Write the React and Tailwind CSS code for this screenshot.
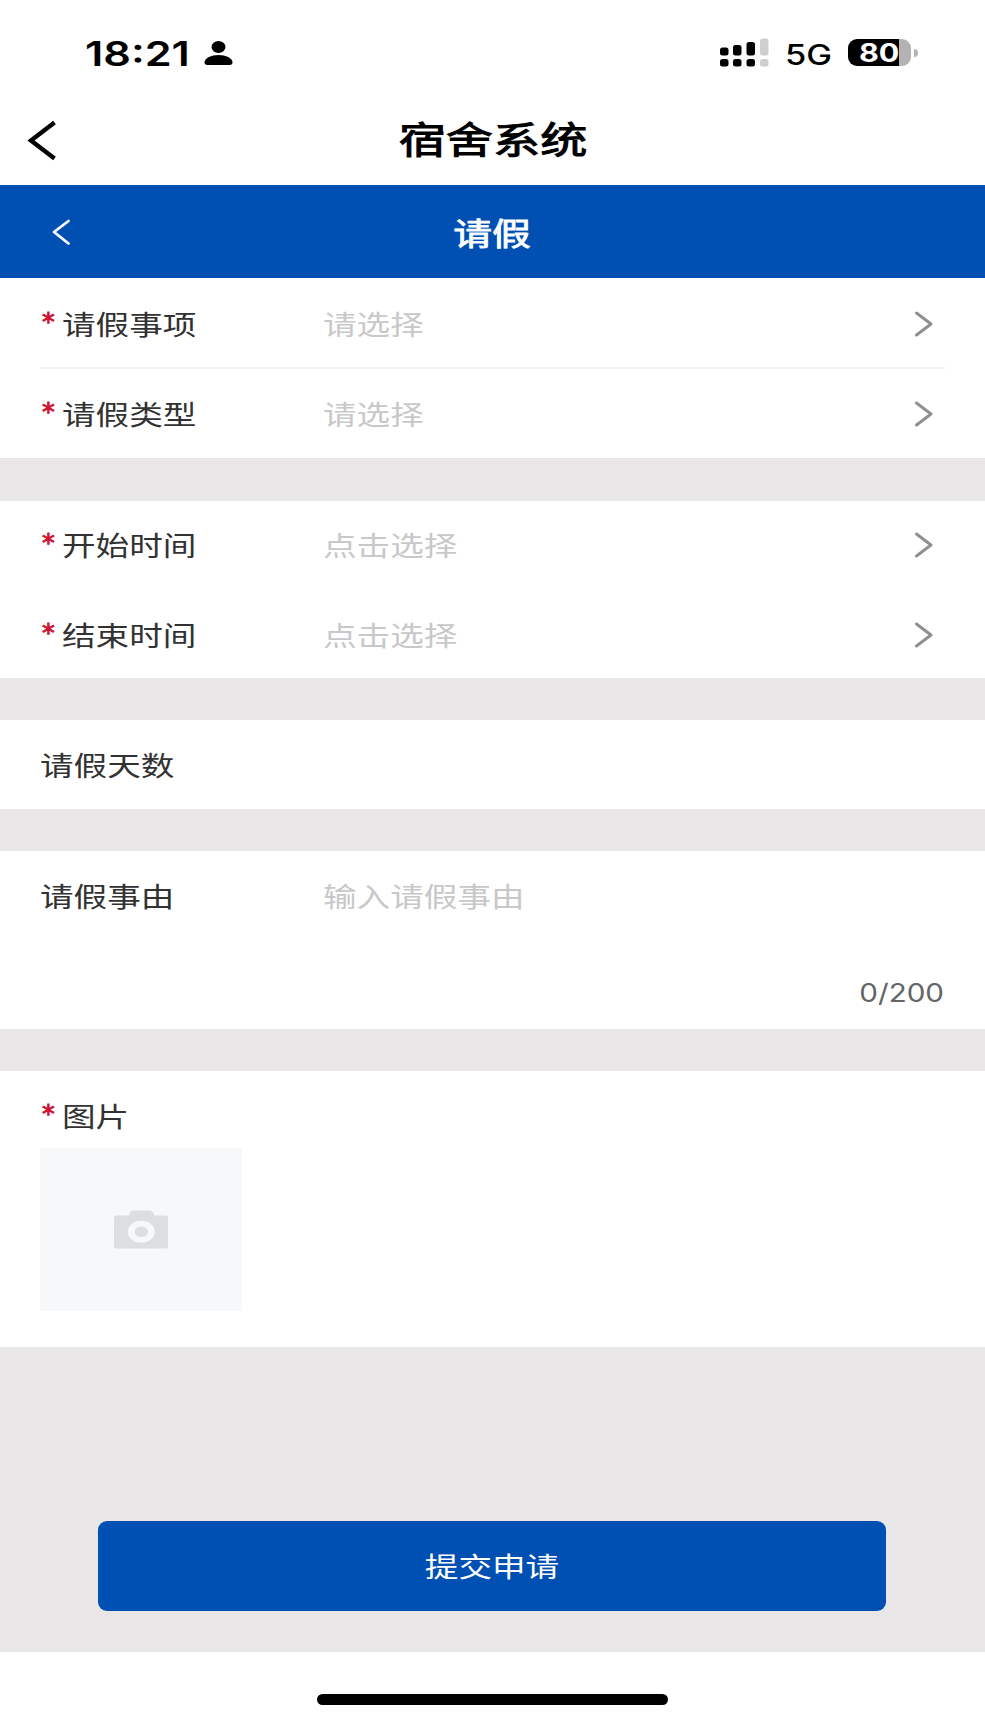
import React from 'react';

// Texto ensanchado en horizontal, anclado a la izquierda
const Label = ({ children, className = '' }) => (
    <span className={`inline-block origin-left scale-x-[1.245] whitespace-nowrap text-[27px] leading-[40px] ${className}`}>
        {children}
    </span>
);

const Required = () => (
    <span className="h-[40px] w-[22px] shrink-0 pl-[2px] font-['DejaVu_Sans',sans-serif] text-[25px] leading-[35px] text-[#d0112f]">
        <span className="inline-block origin-left scale-x-[1.02] [-webkit-text-stroke:0.9px_#d0112f]">*</span>
    </span>
);

const ArrowRight = () => (
    <svg className="mr-[12px] ml-auto" width="20" height="28" viewBox="0 0 20 28" fill="none">
        <path d="M3.5 3 L18 14 L3.5 25" stroke="#8f8f91" strokeWidth="2.9" strokeLinecap="round" strokeLinejoin="round" />
    </svg>
);

// Fila del formulario: etiqueta, valor y flecha opcional
const Field = ({ label, placeholder, required, arrow, className = 'h-[90px]' }) => (
    <div className={`flex items-center ${className}`}>
        <div className="flex w-[283px] shrink-0 items-center">
            {required && <Required />}
            <Label className="text-[#323233]">{label}</Label>
        </div>
        {placeholder && <Label className="text-[#c8c8ca]">{placeholder}</Label>}
        {arrow && <ArrowRight />}
    </div>
);

const StatusBar = () => (
    <div className="flex h-[101px] items-start pt-[33px] pr-[67px] pl-[85px] font-['Inter',sans-serif] text-black">
        <div className="flex h-[41px] w-[119px] items-center">
            <span className="inline-block origin-left scale-x-[1.27] text-[34px] leading-[40px] font-semibold">18:21</span>
        </div>
        <svg className="mt-[8px]" width="29" height="25" viewBox="0 0 29 25">
            <ellipse cx="14.5" cy="6" rx="7" ry="6" />
            <path d="M0.5 21 C1 17 7 14 14.5 14 C22 14 28 17 28.5 21 C28.7 23 27.5 24 25.5 24 H3.5 C1.5 24 0.3 23 0.5 21 Z" />
        </svg>
        <svg className="mt-[5px] ml-auto" width="51" height="30" viewBox="0 0 51 30">
            <rect x="1" y="9.5" width="8.5" height="8" rx="2.5" />
            <rect x="1" y="21" width="8.5" height="7.5" rx="2.5" />
            <rect x="14" y="7" width="8.5" height="10.5" rx="2.5" />
            <rect x="14" y="21" width="8.5" height="7.5" rx="2.5" />
            <rect x="27.5" y="4" width="8.5" height="13.5" rx="2.5" />
            <rect x="27.5" y="21" width="8.5" height="7.5" rx="2.5" />
            <rect x="41" y="0.5" width="8.5" height="17" rx="2.5" fill="#cfcfcf" />
            <rect x="41" y="21" width="8.5" height="7.5" rx="2.5" fill="#cfcfcf" />
        </svg>
        <div className="ml-[15px] flex h-[43px] w-[63px] items-center">
            <span className="inline-block origin-left scale-x-[1.23] text-[28px] leading-[40px] font-medium">5G</span>
        </div>
        <div className="mt-[6px] flex items-center">
            <div className="flex h-[27px] w-[63px] items-center rounded-[9px] bg-[linear-gradient(to_right,#000_51px,#b3b3b3_51px)] pt-px pl-[11px]">
                <span className="inline-block origin-left scale-x-[1.22] text-[25px] leading-[26px] font-bold text-white">80</span>
            </div>
            <div className="ml-[3px] h-[8px] w-[4px] rounded-r-full bg-[#b3b3b3]" />
        </div>
    </div>
);

const App = () => {
    return (
        <div className="flex h-[1721px] w-[985px] flex-col overflow-hidden bg-[#e8e6e7] font-['Noto_Sans_CJK_SC',sans-serif]">
            <div className="h-[185px] bg-white">
                <StatusBar />
                <div className="grid h-[80px] grid-cols-[1fr_auto_1fr] items-center">
                    <svg className="ml-[26px]" width="32" height="42" viewBox="0 0 32 42" fill="none">
                        <path d="M28.5 2.5 L5 20.5 L28.5 38.5" stroke="#000" strokeWidth="4.4" />
                    </svg>
                    <h1 className="mb-[6px] scale-x-[1.275] text-[37px] leading-[56px] text-black [-webkit-text-stroke:1px_#000]">宿舍系统</h1>
                </div>
            </div>

            <header className="grid h-[93px] grid-cols-[1fr_auto_1fr] items-center bg-[#0050b3] text-white">
                <svg className="ml-[50px]" width="22" height="28" viewBox="0 0 22 28" fill="none">
                    <path d="M18.5 3 L4 14 L18.5 25.5" stroke="#fff" strokeWidth="2.8" strokeLinecap="round" strokeLinejoin="round" />
                </svg>
                <h2 className="mr-[1px] scale-x-[1.25] text-[31px] leading-[44px] [-webkit-text-stroke:0.8px_#fff]">请假</h2>
            </header>

            <section className="h-[180px] bg-white px-[40px]">
                <Field label="请假事项" placeholder="请选择" required arrow className="h-[91px] border-b-2 border-[#f3f3f4] pt-[2px]" />
                <Field label="请假类型" placeholder="请选择" required arrow className="h-[89px]" />
            </section>

            <section className="mt-[43px] h-[177px] bg-white px-[40px]">
                <Field label="开始时间" placeholder="点击选择" required arrow className="h-[87px]" />
                <Field label="结束时间" placeholder="点击选择" required arrow className="h-[90px] pt-[3px]" />
            </section>

            <section className="mt-[42px] h-[89px] bg-white px-[40px]">
                <Field label="请假天数" className="h-[89px]" />
            </section>

            <section className="mt-[42px] flex h-[178px] flex-col bg-white px-[40px]">
                <Field label="请假事由" placeholder="输入请假事由" className="h-[89px]" />
                <div className="mt-[33px] mr-[1px] flex justify-end">
                    <span className="inline-block origin-right scale-x-[1.16] font-['Inter',sans-serif] text-[25.5px] leading-[40px] text-[#646566]">0/200</span>
                </div>
            </section>

            <section className="mt-[42px] h-[276px] bg-white px-[40px]">
                <Field label="图片" required className="h-[77px] pt-[12px]" />
                <div className="flex h-[163px] w-[202px] items-center justify-center bg-[#f7f8fa]">
                    <svg width="54" height="39" viewBox="0 0 54 39">
                        <path
                            d="M18.5 0.5 H36 C38.5 1 39.5 3 40.5 5.5 H51.5 Q54 5.5 54 8 V36 Q54 38.5 51.5 38.5 H2.5 Q0 38.5 0 36 V8 Q0 5.5 2.5 5.5 H14.5 C15.5 3 16.5 1 18.5 0.5 Z"
                            fill="#dcdee0"
                        />
                        <ellipse cx="27.3" cy="21.7" rx="13.5" ry="11" fill="#f7f8fa" />
                        <ellipse cx="27.3" cy="21.7" rx="6.7" ry="5.3" fill="#dcdee0" />
                    </svg>
                </div>
            </section>

            <div className="flex h-[305px] flex-col items-center pt-[174px]">
                <button className="mr-[1px] h-[90px] w-[788px] rounded-[9px] bg-[#0050b3] text-[27px] text-white">
                    <span className="inline-block scale-x-[1.245]">提交申请</span>
                </button>
            </div>

            <footer className="flex flex-1 justify-center bg-white pt-[42px]">
                <div className="h-[11px] w-[351px] rounded-full bg-black" />
            </footer>
        </div>
    );
};

export default App;
